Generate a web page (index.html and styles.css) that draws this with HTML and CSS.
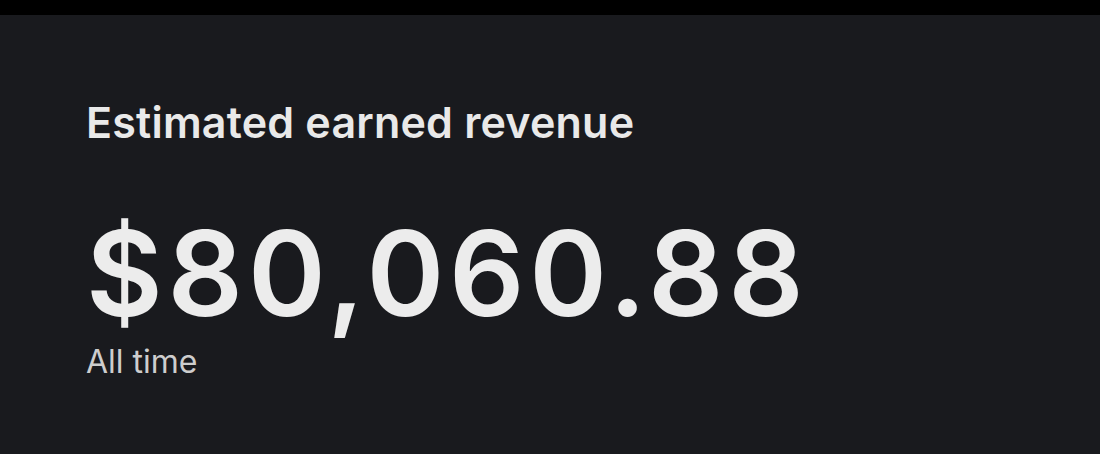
FILE: index.html
```html
<!DOCTYPE html>
<html lang="en">
<head>
  <meta charset="UTF-8" />
  <meta name="viewport" content="width=device-width, initial-scale=1.0"/>
  <title>Estimated earned revenue</title>
  <link rel="stylesheet" href="styles.css">
</head>
<body>

<div class="panel">
  <h2 class="label">Estimated earned revenue</h2>
  <div class="amount">$80,060.88</div>
  <div class="period">All time</div>
</div>

</body>
</html>
```

FILE: styles.css
```css
:root {
  --bg: #191a1e;
  --text: #ececec;
  --muted: #cdcdcd;
}
* {
  box-sizing: border-box;
}
html, body {
  height: 100%;
}
body {
  margin: 0;
  background: #000;
  font-family: Inter, 'Noto Sans', sans-serif;
  color: var(--text);
  padding-top: 15px;
}
.panel {
  background: var(--bg);
  height: 439px;
  padding: 86px 0 0 86px;
}
.label {
  margin: 0;
  font-size: 43px;
  font-weight: 600;
  letter-spacing: 0.2px;
  line-height: 1;
  color: #e9e9e9;
}
.amount {
  margin-top: 70px;
  font-size: 118px;
  font-weight: 600;
  letter-spacing: 4.8px;
  line-height: 1;
}
.period {
  margin-top: 14px;
  font-size: 32px;
  line-height: 1;
  color: var(--muted);
}
```
